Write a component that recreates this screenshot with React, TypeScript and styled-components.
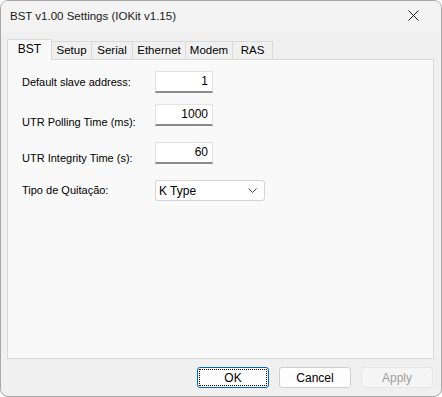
import React, { FC } from "react";
import styled, { createGlobalStyle } from "styled-components";

const GlobalStyle = createGlobalStyle`
  html, body {
    margin: 0;
    padding: 0;
    background: #ffffff;
  }
  body {
    font-family: "Liberation Sans", Arial, sans-serif;
    font-size: 11px;
    color: #000000;
  }
`;

const Window = styled.div`
  box-sizing: border-box;
  width: 442px;
  height: 397px;
  border: 1px solid #a9a9a9;
  border-radius: 8px;
  background: #f0f0f0;
  display: flex;
  flex-direction: column;
  overflow: hidden;
`;

const TitleBar = styled.div`
  box-sizing: border-box;
  height: 31px;
  display: flex;
  align-items: center;
  justify-content: space-between;
  padding: 0 22px 2px 9px;
  background: #f3f3f3;
  font-size: 11.5px;
  color: #1a1a1a;
`;

const CloseButton = styled.div`
  width: 12px;
  height: 12px;
  display: flex;
  align-items: center;
  justify-content: center;
`;

const Body = styled.div`
  flex: 1;
  display: flex;
  flex-direction: column;
  padding: 6px 7px 0 6px;
`;

const TabStrip = styled.div`
  height: 21px;
  display: flex;
  align-items: flex-end;
  position: relative;
  z-index: 1;
`;

const Tab = styled.div<{ $active?: boolean; $w: number }>`
  box-sizing: border-box;
  width: ${p => p.$w}px;
  height: ${p => (p.$active ? "21px" : "18px")};
  padding-top: ${p => (p.$active ? "2px" : "2px")};
  margin-bottom: ${p => (p.$active ? "-1px" : "0")};
  border: 1px solid #d9d9d9;
  border-bottom: none;
  border-left: ${p => (p.$active ? "1px solid #d9d9d9" : "none")};
  background: ${p => (p.$active ? "#f9f9f9" : "#f0f0f0")};
  font-size: ${p => (p.$active ? "12px" : "11.5px")};
  text-align: center;
  white-space: nowrap;
`;

const Panel = styled.div`
  box-sizing: border-box;
  height: 300px;
  background: #f9f9f9;
  border: 1px solid #d9d9d9;
  padding: 11px 0 0 14px;
  display: grid;
  grid-template-columns: 133px auto;
  align-content: start;
  row-gap: 11px;
`;

const Label = styled.div<{ $drop?: number }>`
  align-self: center;
  padding-top: ${p => (p.$drop ? `${p.$drop * 2}px` : "0")};
  white-space: nowrap;
`;

const FieldCell = styled.div`
  display: flex;
`;

const NumberInput = styled.div<{ $gap?: number }>`
  box-sizing: border-box;
  width: 58px;
  height: 22px;
  background: #ffffff;
  border: 1px solid #e3e3e3;
  border-bottom: 2px solid #8a8a8a;
  text-align: right;
  padding: 2px 4px 0 0;
  font-size: 12px;
  margin-top: ${p => p.$gap ?? 0}px;
`;

const Select = styled.div`
  box-sizing: border-box;
  width: 110px;
  height: 21px;
  margin-top: 5px;
  background: #ffffff;
  border: 1px solid #d4d4d4;
  border-radius: 3px;
  display: flex;
  align-items: center;
  justify-content: space-between;
  padding: 0 7px 0 3px;
  font-size: 12px;
`;

const Footer = styled.div`
  display: flex;
  justify-content: flex-end;
  gap: 10px;
  padding: 8px 1px 0 0;
`;

const Button = styled.div<{ $variant?: "default" | "disabled" }>`
  box-sizing: border-box;
  width: 72px;
  height: 21px;
  border-radius: 3px;
  display: flex;
  align-items: center;
  justify-content: center;
  font-size: 12px;
  position: relative;
  background: ${p => (p.$variant === "disabled" ? "#f5f5f5" : "#fdfdfd")};
  color: ${p => (p.$variant === "disabled" ? "#a0a0a0" : "#000000")};
  border: 1px solid
    ${p =>
      p.$variant === "default"
        ? "#0067c0"
        : p.$variant === "disabled"
        ? "#e6e6e6"
        : "#d0d0d0"};
`;

const FocusRing = styled.span`
  position: absolute;
  inset: 1px;
  border: 1px dotted #000000;
  border-radius: 1px;
`;

const tabs: [string, number][] = [
  ["Setup", 40],
  ["Serial", 41],
  ["Ethernet", 53],
  ["Modem", 47],
  ["RAS", 40],
];

const App: FC = () => (
  <>
    <GlobalStyle />
    <Window>
      <TitleBar>
        <span>BST v1.00 Settings (IOKit v1.15)</span>
        <CloseButton>
          <svg width="11" height="11" viewBox="0 0 11 11">
            <path d="M0.5 0.5 L10.5 10.5 M10.5 0.5 L0.5 10.5" stroke="#1a1a1a" strokeWidth="1" />
          </svg>
        </CloseButton>
      </TitleBar>
      <Body>
        <TabStrip>
          <Tab $active $w={45}>
            BST
          </Tab>
          {tabs.map(([t, w]) => (
            <Tab key={t} $w={w}>
              {t}
            </Tab>
          ))}
        </TabStrip>
        <Panel>
          <Label>Default slave address:</Label>
          <FieldCell>
            <NumberInput>1</NumberInput>
          </FieldCell>
          <Label $drop={6}>UTR Polling Time (ms):</Label>
          <FieldCell>
            <NumberInput>1000</NumberInput>
          </FieldCell>
          <Label $drop={6}>UTR Integrity Time (s):</Label>
          <FieldCell>
            <NumberInput $gap={3}>60</NumberInput>
          </FieldCell>
          <Label $drop={2}>Tipo de Quitação:</Label>
          <FieldCell>
            <Select>
              <span>K Type</span>
              <svg width="9" height="5" viewBox="0 0 9 5">
                <path d="M0.5 0.5 L4.5 4.5 L8.5 0.5" fill="none" stroke="#444" strokeWidth="1" />
              </svg>
            </Select>
          </FieldCell>
        </Panel>
        <Footer>
          <Button $variant="default">
            <FocusRing />
            OK
          </Button>
          <Button>Cancel</Button>
          <Button $variant="disabled">Apply</Button>
        </Footer>
      </Body>
    </Window>
  </>
);

export default App;
